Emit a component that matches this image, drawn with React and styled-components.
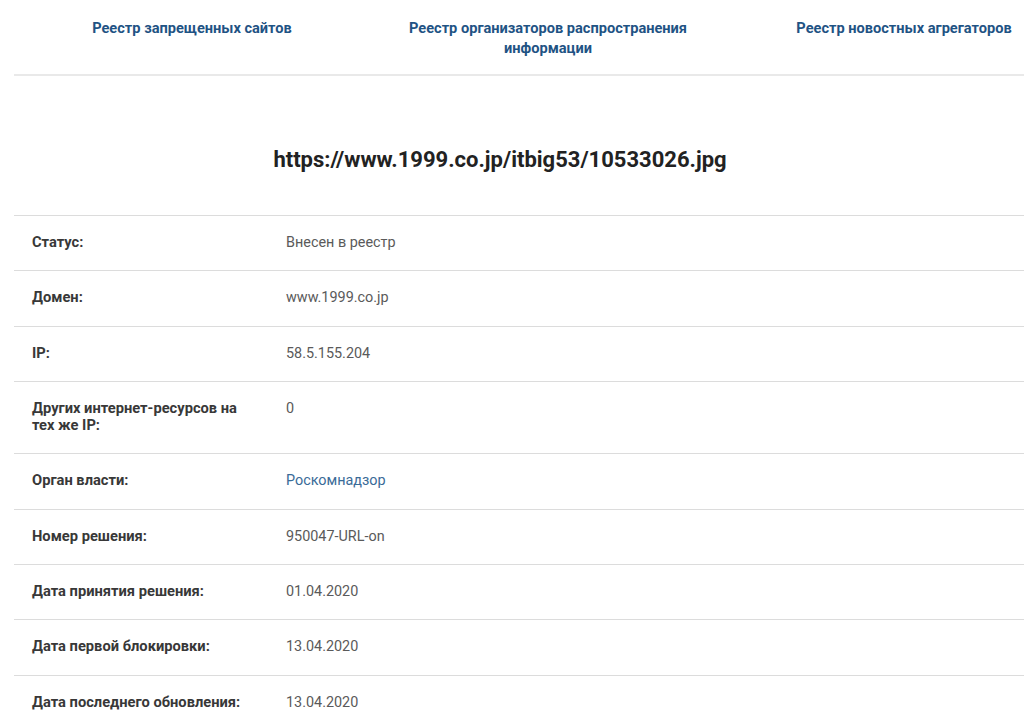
import React from "react";
import styled, { createGlobalStyle } from "styled-components";

const Global = createGlobalStyle`
  html, body { margin: 0; padding: 0; background: #fff; overflow: hidden; }
  body { font-family: Roboto, "Liberation Sans", Arial, sans-serif; }
`;

const Page = styled.div`
  width: 1068px;
  margin-left: 14px;
`;

const Nav = styled.nav`
  display: grid;
  grid-template-columns: repeat(3, 356px);
  padding: 18px 0 16px;
  border-bottom: 2px solid #e9e9e9;
`;

const NavLink = styled.a`
  display: block;
  padding: 0 30px;
  text-align: center;
  font-size: 14.6px;
  font-weight: 700;
  line-height: 20px;
  color: #1f5384;
  text-decoration: none;
`;

const Title = styled.h1`
  margin: 0;
  padding: 71px 96px 42px 0;
  text-align: center;
  font-size: 22px;
  font-weight: 700;
  line-height: 26px;
  color: #222;
  border-bottom: 1px solid #dcdcdc;
`;

const Row = styled.div`
  display: grid;
  grid-template-columns: 218px 1fr;
  column-gap: 36px;
  padding: 18px 0 19px 18px;
  border-bottom: 1px solid #dcdcdc;
  line-height: 17.3px;
`;

const Label = styled.div`
  font-size: 14.7px;
  font-weight: 700;
  color: #383838;
`;

const Value = styled.div`
  font-size: 14.4px;
  color: ${(p) => (p.$link ? "#3a6b98" : "#5a5a5a")};
`;

const rows = [
  ["Статус:", "Внесен в реестр"],
  ["Домен:", "www.1999.co.jp"],
  ["IP:", "58.5.155.204"],
  ["Других интернет-ресурсов на тех же IP:", "0"],
  ["Орган власти:", "Роскомнадзор", true],
  ["Номер решения:", "950047-URL-on"],
  ["Дата принятия решения:", "01.04.2020"],
  ["Дата первой блокировки:", "13.04.2020"],
  ["Дата последнего обновления:", "13.04.2020"],
];

export default function App() {
  return (
    <>
      <Global />
      <Page>
        <Nav>
          <NavLink href="#">Реестр запрещенных сайтов</NavLink>
          <NavLink href="#">Реестр организаторов распространения информации</NavLink>
          <NavLink href="#">Реестр новостных агрегаторов</NavLink>
        </Nav>
        <Title>https://www.1999.co.jp/itbig53/10533026.jpg</Title>
        {rows.map(([l, v, link]) => (
          <Row key={l}>
            <Label>{l}</Label>
            <Value $link={link}>{v}</Value>
          </Row>
        ))}
      </Page>
    </>
  );
}
